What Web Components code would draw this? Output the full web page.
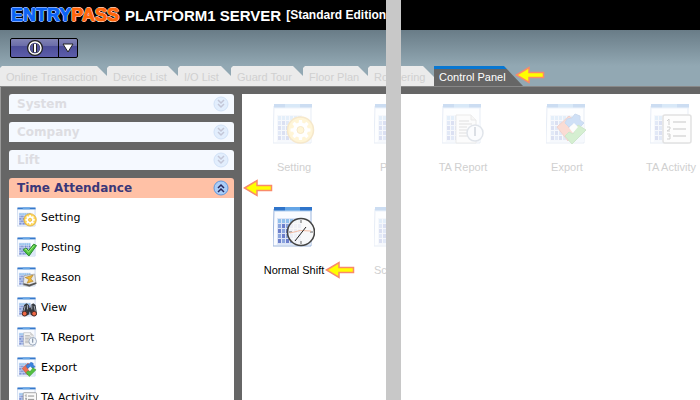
<!DOCTYPE html>
<html lang="en">
<head>
<meta charset="utf-8">
<title>Platform1 Server</title>
<style>
html, body { margin: 0; height: 100%; }
body { background: #c8c8c8; font: 11px "Liberation Sans", Arial, sans-serif; overflow: hidden; }
</style>
</head>
<body>
<ep-app></ep-app>
<script>
const define = (name, html, setup) => {
  const t = document.createElement('template');
  t.innerHTML = html;
  customElements.define(name, class extends HTMLElement {
    connectedCallback() {
      if (this.shadowRoot) return;
      const content = t.content.cloneNode(true);
      if (setup) setup(this, content);
      this.attachShadow({ mode: 'open' }).append(content);
    }
  });
};

/* Artwork laid over the calendar sheet, on a 42 x 42 grid */
const teeth = [0, 45, 90, 135, 180, 225, 270, 315].map(a =>
  `<path d="M25.500 21l.5-4h3l.5 4z" fill="#fff" transform="rotate(${a} 27.5 27)"/>`).join('');
const badges = {
  setting: `<circle cx="27.500" cy="27" r="13" fill="#ffd95c" stroke="#dba12c" stroke-width="1.500"/>
    <circle cx="27.500" cy="27" r="5.500" fill="none" stroke="#fff" stroke-width="4"/>${teeth}
    <circle cx="27.500" cy="27" r="3.500" fill="#ffdc60" stroke="#dca32c"/>`,
  posting: `<path d="M13 27l6-4 5 6 11-14 6 3-16 22z" fill="#4fc43f" stroke="#26862a" stroke-width="2"/><path d="M16 27l3-2 5 7 12-14" fill="none" stroke="#a5ee82" stroke-width="2"/>`,
  reason: `<path d="M15 18l22-3 3 20-14 6-13-3z" fill="#e9e9e9" stroke="#999" stroke-width="1.500"/><path d="M13 37l13 4 15-6-1-3-14 5-12-3z" fill="#555"/><path d="M17 22l17-5-5 8 5 5-13 4 4-8z" fill="#edb83b" stroke="#9b6a16"/>`,
  view: `<path d="M15 17l5-4 5 4v5h4v-5l5-4 5 4 3 19-5 4-8-2-2-8-3 8-9 2-5-4z" fill="#343940"/><path d="M17 19l-3 13M36 19l3 13M22 17v9M31 17v9" stroke="#a9b0ba" stroke-width="2"/><circle cx="16" cy="35" r="5" fill="#ef6844" stroke="#4a2b28" stroke-width="2"/><circle cx="36" cy="35" r="5" fill="#ef6844" stroke="#4a2b28" stroke-width="2"/>`,
  report: `<path d="M14 12h15l5 5v23H14z" fill="#f4f4f4" stroke="#aaa"/><path d="M29 12v5h5" fill="#ddd" stroke="#aaa"/><path d="M17 18h10M17 21h13M17 24h8M17 27h8M17 30h8M17 33h11" stroke="#bbb" stroke-width="2"/><circle cx="33" cy="30" r="8" fill="#f1f6fb" stroke="#8193ac" stroke-width="1.500"/><path d="M33 24v9" stroke="#405573" stroke-width="1.500"/>`,
  export: `<path d="M11 24L23 13l5 4-6 7 6 6-6 8z" fill="#ed6f50" stroke="#c44731"/><path d="M21 16l5-1 3-4 5 2v4l4 3-6 6-5-5-4 3-4-4z" fill="#3b82dd" stroke="#2867bd"/><path d="M32 22l8 5-14 14-7-8 4-4 4 2z" fill="#55bf42" stroke="#38992d"/><path d="M23 25l5-5 4 4-5 6z" fill="#f5f7f5"/>`,
  activity: `<rect x="13" y="12" width="28" height="28" rx="2" fill="#fafafa" stroke="#888" stroke-width="1.500"/><path d="M23 19h13M23 26h13M23 33h13" stroke="#666" stroke-width="1.500"/><path d="M17 18l2-2v6M17 24h3v2l-3 2h3M17 31h3v5h-3M18 33h2" fill="none" stroke="#444"/>`,
  shift: `<circle cx="28" cy="26" r="13.500" fill="#fafafa" fill-opacity=".9" stroke="#444" stroke-width="1.600"/><path d="M28 14v3M28 35v3M16 26h3M37 26h3" stroke="#666"/><path d="M17 27q10-4 21-2" fill="none" stroke="#f4bda5"/><path d="M33 21L22 35" stroke="#222"/>`,
  none: ''
};
define('ep-icon', `<style>
:host { display: block; width: 42px; height: 42px; flex: none; }
:host([small]) { width: 20px; height: 20px; }
:host([faded]) { opacity: .24; }
svg { display: block; width: 100%; height: 100%; }
</style><svg viewBox="0 0 42 42" aria-hidden="true"></svg>`, (el, root) => {
  const dots = [0,1,2,3,4].map(y => [0,1,2,3,4,5].map(x =>
    `<rect x="${5 + x * 4}" y="${13 + y * 5}" width="3" height="4" fill="${y ? (x + y) % 2 ? '#8ba5de' : '#6c7fcb' : '#91c0ec'}"/>`).join('')).join('');
  root.querySelector('svg').innerHTML = `
    <path d="M1 3h37v37H0z" fill="#f9fbff" stroke="#9db6dc"/>
    <path d="M3 39h35V20z" fill="#dce7f7"/>
    <rect x="4" y="12" width="25" height="26" fill="#dce4f6"/>${dots}
    <path d="M1 1h38v4H1z" fill="#2f74ca"/><path d="M12 1h15v4H12z" fill="#64a5e6"/><path d="M1 5h38" stroke="#b4d0ef"/>
    ${badges[el.getAttribute('kind') || 'none']}`;
});

define('ep-arrow', `<style>
:host { display: block; width: 30px; height: 18px; }
svg { display: block; }
</style><svg width="30" height="18" viewBox="0 0 30 18" aria-hidden="true"><path d="M1.500 9L14 1.500V6.500H28.500V11.500H14V16.500z" fill="#ff0" stroke="#f98a6a" stroke-width="1.500"/></svg>`);

define('ep-tab', `<style>
:host { display: block; flex: none; height: 20px; }
button { width: 100%; height: 20px; box-sizing: border-box; border: 0; padding: 2px 0 0 6px; text-align: left; white-space: nowrap;
  font: 11px "Liberation Sans", Arial, sans-serif; color: #d0d0d0; background: #ebebeb;
  clip-path: polygon(0 2px, 2px 0, calc(100% - 10px) 0, 100% 10px, 100% 100%, 0 100%); }
:host([open]) button { clip-path: polygon(0 0, calc(100% - 11px) 0, 100% 11px, 100% 100%, 0 100%); padding-left: 0; }
:host([active]) button { background: linear-gradient(#0877d1 3px, #666 3px); color: #fff; clip-path: polygon(0 0, calc(100% - 19px) 0, 100% 100%, 0 100%); padding-left: 5px; }
</style><button type="button" role="tab"><slot></slot></button>`);

define('ep-pane', `<style>
:host { display: grid; grid-template-rows: 30px 36px 20px minmax(0, 1fr); min-width: 0; overflow: hidden;
  background: linear-gradient(#000 30px, #697c87 30px, #92a8b3 66px, #92a8b3 86px, #666 86px); }
header { display: flex; align-items: center; color: #fff; white-space: nowrap; }
.bar { display: flex; align-items: center; }
nav { display: flex; min-width: 0; }
main { display: flex; min-width: 0; min-height: 0; border-top: 1px solid #888; }
</style><header><slot name="title"></slot></header><div class="bar"><slot name="tools"></slot></div>
<nav role="tablist"><slot name="tabs"></slot></nav><main><slot></slot></main>`);

define('ep-brand', `<style>
:host { display: flex; align-items: center; padding-left: 11px; font: bold 15px "Liberation Sans", Arial, sans-serif; }
b { font-size: 18px; line-height: 20px; margin-right: 6px; color: #0a62f5; -webkit-text-stroke: 1px currentColor;
  text-shadow: 1px 0 #fff, -1px 0 #fff, 0 1px #fff, 0 -1px #fff; }
i { font-style: normal; color: #ff6508; }
small { font: bold 12px "Liberation Sans", Arial, sans-serif; margin-left: 5px; }
</style><b>ENTRY<i>PASS</i></b><span>PLATFORM1 SERVER</span><small>[Standard Edition</small>`);

define('ep-power', `<style>
:host { display: flex; margin-left: 10px; }
button { box-sizing: border-box; height: 20px; width: 49px; padding: 0; border: 1px solid #000; display: grid; place-items: center;
  background: linear-gradient(#8183b4, #6a6ca8 40%, #4c4e98 41%, #5c5daa); border-radius: 2px 0 0 2px; }
button + button { width: 20px; margin-left: -1px; border-radius: 0 2px 2px 0; }
</style><button type="button" aria-label="Power"><svg width="16" height="16" viewBox="0 0 16 16"><circle cx="8" cy="8" r="6.500" fill="#55579d" stroke="#222" stroke-width="3"/><circle cx="8" cy="8" r="6" fill="none" stroke="#fff" stroke-width="1.500"/><path d="M8 4v8" stroke="#222" stroke-width="4"/><path d="M8 4v8" stroke="#fff" stroke-width="2"/></svg></button>
<button type="button" aria-label="Power options"><svg width="12" height="10" viewBox="0 0 12 10"><path d="M1 1h10L6 9z" fill="#fff" stroke="#222"/></svg></button>`);

define('ep-section', `<style>
:host { display: block; position: relative; }
button { display: flex; align-items: center; justify-content: space-between; width: 100%; height: 20px; box-sizing: border-box; border: 0;
  padding: 0 5px 0 8px; border-radius: 3px 3px 0 0; background: #f5f9ff; color: #dddde2; font: bold 12px "DejaVu Sans", Verdana, sans-serif; }
:host([open]) button { background: #ffc1a6; color: #3a3778; }
svg { display: block; opacity: .24; }
:host([open]) svg { opacity: 1; }
:host([open]) path { transform: rotate(180deg); transform-origin: 8px 8px; }
</style><button type="button"><span><slot></slot></span><svg width="16" height="16" viewBox="0 0 16 16"><circle cx="8" cy="8" r="7" fill="#a9cdf8" stroke="#6298dc"/><path d="M5 4l3 3 3-3M5 8l3 3 3-3" fill="none" stroke="#28285c" stroke-width="1.500"/></svg></button>`);

define('ep-link', `<style>
:host { display: block; }
a { display: flex; align-items: center; gap: 4px; height: 30px; color: #000; text-decoration: none; white-space: nowrap; font: 11px "DejaVu Sans", Verdana, sans-serif; }
</style><a href="#"><ep-icon small></ep-icon><span><slot></slot></span></a>`, (el, root) => root.querySelector('ep-icon').setAttribute('kind', el.getAttribute('kind')));

define('ep-sidebar', `<style>
:host { display: flex; flex-direction: column; gap: 8px; flex: none; box-sizing: border-box; width: 242px; padding: 7px 8px 0 8px; border-left: 1px solid #999; }
.list { background: #fff; margin-top: -8px; padding: 4px 8px; flex: 1; min-height: 0; overflow: hidden; }
.open { position: relative; }
.open ep-arrow { position: absolute; left: 100%; top: 1px; margin-left: 9px; z-index: 1; }
</style>
<ep-section>System</ep-section><ep-section>Company</ep-section><ep-section>Lift</ep-section>
<div class="open"><ep-section open>Time Attendance</ep-section><ep-arrow></ep-arrow></div>
<div class="list"><ep-link kind="setting">Setting</ep-link><ep-link kind="posting">Posting</ep-link><ep-link kind="reason">Reason</ep-link><ep-link kind="view">View</ep-link><ep-link kind="report">TA Report</ep-link><ep-link kind="export">Export</ep-link><ep-link kind="activity">TA Activity</ep-link></div>`);

define('ep-tile', `<style>
:host { display: block; width: 104px; flex: none; position: relative; }
a { display: flex; flex-direction: column; align-items: center; gap: 15px; color: #000; text-decoration: none; white-space: nowrap; line-height: 14px; }
:host([faded]) a { color: #d0d0d0; }
:host([cut]) a { align-items: flex-start; padding-left: 28px; }
:host([cut]) span { padding-left: var(--label-inset, 0); }
</style><a href="#"><ep-icon></ep-icon><span><slot></slot></span></a><slot name="pointer"></slot>`, (el, root) => {
  const icon = root.querySelector('ep-icon');
  icon.setAttribute('kind', el.getAttribute('kind') || 'none');
  icon.toggleAttribute('faded', el.hasAttribute('faded'));
});

define('ep-app', `<style>
:host { display: grid; grid-template-columns: 386fr 15px 299fr; height: 100vh; min-height: 100%; }
.board { flex: 1; min-width: 0; margin-top: 7px; background: #fff; overflow: hidden; display: grid; grid-auto-rows: 70px; row-gap: 33px; align-content: start; padding-top: 9px; box-sizing: border-box; }
.left { grid-template-columns: 104px 104px; }
.right { grid-template-columns: repeat(3, 104px); padding-left: 10px; }
[slot=pointer] { position: absolute; top: 55px; left: 83px; }
.inset { --label-inset: 6px; }
.t1 { width: 107px; } .t2 { width: 71px; } .t3 { width: 53px; } .t4 { width: 72px; } .t5 { width: 65px; } .t6 { width: 66px; } .t7 { width: 33px; } .t8 { width: 89px; }
ep-arrow.tab { margin-left: -8px; }
</style>
<ep-pane><ep-brand slot="title"></ep-brand><ep-power slot="tools"></ep-power>
<ep-tab slot="tabs" class="t1">Online Transaction</ep-tab><ep-tab slot="tabs" class="t2">Device List</ep-tab><ep-tab slot="tabs" class="t3">I/O List</ep-tab><ep-tab slot="tabs" class="t4">Guard Tour</ep-tab><ep-tab slot="tabs" class="t5">Floor Plan</ep-tab><ep-tab slot="tabs" class="t6">Ro</ep-tab>
<ep-sidebar></ep-sidebar>
<div class="board left"><ep-tile kind="setting" faded>Setting</ep-tile><ep-tile cut faded class="inset">P</ep-tile><ep-tile kind="shift">Normal Shift<ep-arrow slot="pointer"></ep-arrow></ep-tile><ep-tile cut faded>Sc</ep-tile></div></ep-pane>
<div></div>
<ep-pane><ep-tab slot="tabs" class="t7" open>ering</ep-tab><ep-tab slot="tabs" class="t8" active>Control Panel</ep-tab><ep-arrow slot="tabs" class="tab"></ep-arrow>
<div class="board right"><ep-tile kind="report" faded>TA Report</ep-tile><ep-tile kind="export" faded>Export</ep-tile><ep-tile kind="activity" faded>TA Activity</ep-tile></div></ep-pane>`);
</script>
</body>
</html>
